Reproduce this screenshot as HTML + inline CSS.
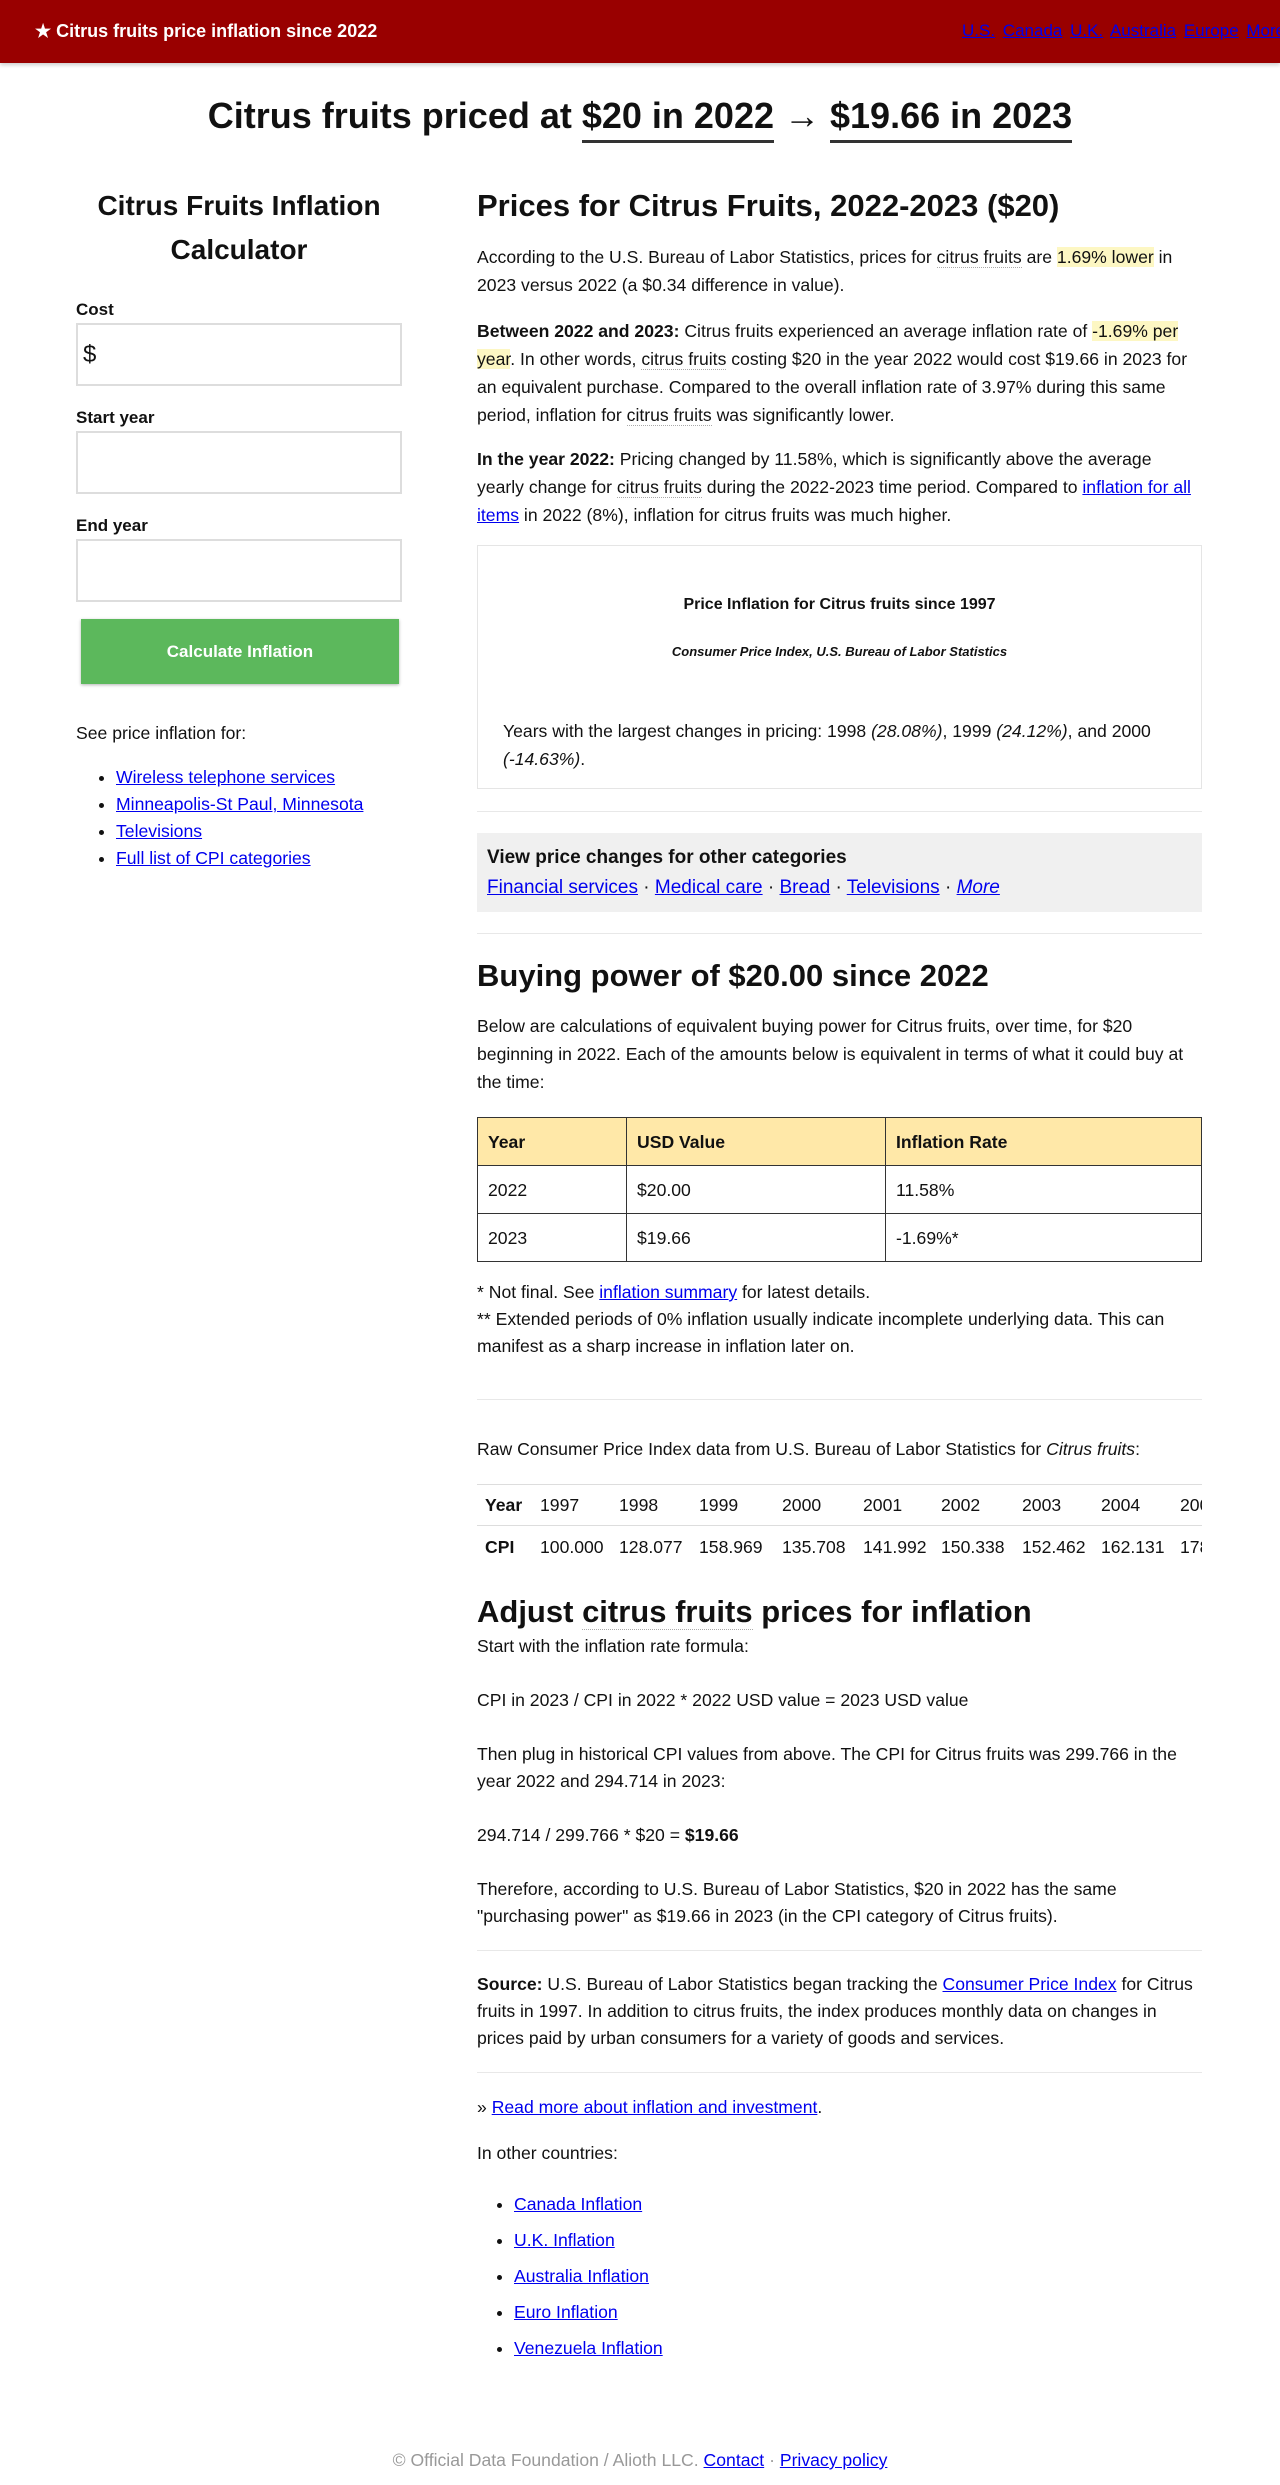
<!DOCTYPE html>
<html><head><meta charset="utf-8">
<style>
*{box-sizing:border-box}
body{margin:0;width:1280px;height:2485px;position:relative;font-family:"Liberation Sans",sans-serif;color:#111;font-size:17.6px;line-height:28px;background:#fff;overflow:hidden}
a{color:#00e}
.hdr{position:absolute;left:0;top:0;width:1280px;height:63px;background:#990000;box-shadow:0 2px 4px rgba(0,0,0,.2)}
.hdr .t{position:absolute;left:35px;top:18px;color:#fff;font-weight:bold;font-size:18px;line-height:26px}
.hdr .n{position:absolute;left:962px;top:18px;font-size:17px;line-height:26px;white-space:nowrap}
.hdr .n a{color:#00e;margin-right:3px}
.abs{position:absolute}
h1{position:absolute;left:0;width:1280px;top:92px;margin:0;text-align:center;font-size:36px;line-height:48px}
h1 u{text-decoration:none;border-bottom:3px solid #333;padding-bottom:4px}
.left{left:76px;width:326px}
.lab{font-weight:bold;font-size:17px}
.inp{position:absolute;left:76px;width:326px;height:63px;border:2px solid #ddd}
.btn{position:absolute;left:81px;top:619px;width:318px;height:65px;background:#5cb85c;color:#fff;font-weight:bold;font-size:17px;text-align:center;line-height:65px;box-shadow:0 1px 3px rgba(0,0,0,.3)}
.r{left:477px;width:725px}
h2{margin:0;font-size:31px;line-height:40px}
.hl{background:#fdf7c3}
.dot{border-bottom:1px dotted #aaa}
p{margin:0}
.hr{position:absolute;left:477px;width:725px;height:1px;background:#e8e8e8}
table.b{border-collapse:collapse;width:725px}
table.b td{border:1px solid #333;height:48px;padding:0 10px;font-size:17.6px}
table.b tr:first-child td{background:#ffe8a8;font-weight:bold}
ul{margin:0;padding-left:40px}
</style></head><body>
<div class="hdr"><div class="t">★ Citrus fruits price inflation since 2022</div>
<div class="n"><a href="#">U.S.</a> <a href="#">Canada</a> <a href="#">U.K.</a> <a href="#">Australia</a> <a href="#">Europe</a> <a href="#">More</a></div></div>

<h1>Citrus fruits priced at <u>$20 in 2022</u> → <u>$19.66 in 2023</u></h1>

<div class="abs left" style="top:184px;text-align:center;font-size:28px;font-weight:bold;line-height:44px">Citrus Fruits Inflation Calculator</div>
<div class="abs left lab" style="top:296px">Cost</div>
<div class="inp" style="top:323px"><span style="position:absolute;left:5px;top:16px;font-size:24px">$</span></div>
<div class="abs left lab" style="top:404px">Start year</div>
<div class="inp" style="top:431px"></div>
<div class="abs left lab" style="top:512px">End year</div>
<div class="inp" style="top:539px"></div>
<div class="btn">Calculate Inflation</div>
<div class="abs left" style="top:719px">See price inflation for:</div>
<ul class="abs" style="left:76px;top:764px;line-height:27px">
<li><a href="#">Wireless telephone services</a></li>
<li><a href="#">Minneapolis-St Paul, Minnesota</a></li>
<li><a href="#">Televisions</a></li>
<li><a href="#">Full list of CPI categories</a></li></ul>

<div class="abs r" style="top:186px"><h2>Prices for Citrus Fruits, 2022-2023 ($20)</h2></div>
<div class="abs r" style="top:243px"><p>According to the U.S. Bureau of Labor Statistics, prices for <span class="dot">citrus fruits</span> are <span class="hl">1.69% lower</span> in 2023 versus 2022 (a $0.34 difference in value).</p></div>
<div class="abs r" style="top:317px"><p><b>Between 2022 and 2023:</b> Citrus fruits experienced an average inflation rate of <span class="hl">-1.69% per year</span>. In other words, <span class="dot">citrus fruits</span> costing $20 in the year 2022 would cost $19.66 in 2023 for an equivalent purchase. Compared to the overall inflation rate of 3.97% during this same period, inflation for <span class="dot">citrus fruits</span> was significantly lower.</p></div>
<div class="abs r" style="top:445px"><p><b>In the year 2022:</b> Pricing changed by 11.58%, which is significantly above the average yearly change for <span class="dot">citrus fruits</span> during the 2022-2023 time period. Compared to <a href="#">inflation for all items</a> in 2022 (8%), inflation for citrus fruits was much higher.</p></div>
<div class="abs r" style="top:545px;height:244px;border:1px solid #e5e5e5">
<div style="position:absolute;top:45px;width:100%;text-align:center;font-weight:bold;font-size:16px">Price Inflation for Citrus fruits since 1997</div>
<div style="position:absolute;top:92px;width:100%;text-align:center;font-weight:bold;font-style:italic;font-size:13px">Consumer Price Index, U.S. Bureau of Labor Statistics</div>
<div style="position:absolute;top:171px;left:25px;right:25px">Years with the largest changes in pricing: 1998 <i>(28.08%)</i>, 1999 <i>(24.12%)</i>, and 2000 <i>(-14.63%)</i>.</div></div>
<div class="hr" style="top:811px"></div>
<div class="abs r" style="top:833px;height:79px;background:#f0f0f0;padding:10px 10px;font-size:19px;line-height:30px"><b>View price changes for other categories</b><br><a href="#">Financial services</a> · <a href="#">Medical care</a> · <a href="#">Bread</a> · <a href="#">Televisions</a> · <a href="#"><i>More</i></a></div>
<div class="hr" style="top:933px"></div>
<div class="abs r" style="top:956px"><h2>Buying power of $20.00 since 2022</h2></div>
<div class="abs r" style="top:1012px"><p>Below are calculations of equivalent buying power for Citrus fruits, over time, for $20 beginning in 2022. Each of the amounts below is equivalent in terms of what it could buy at the time:</p></div>
<div class="abs r" style="top:1117px"><table class="b">
<tr><td style="width:149px">Year</td><td style="width:259px">USD Value</td><td>Inflation Rate</td></tr>
<tr><td>2022</td><td>$20.00</td><td>11.58%</td></tr>
<tr><td>2023</td><td>$19.66</td><td>-1.69%*</td></tr></table></div>
<div class="abs r" style="top:1279px;line-height:27px">* Not final. See <a href="#">inflation summary</a> for latest details.<br>** Extended periods of 0% inflation usually indicate incomplete underlying data. This can manifest as a sharp increase in inflation later on.</div>
<div class="hr" style="top:1399px"></div>
<div class="abs r" style="top:1435px">Raw Consumer Price Index data from U.S. Bureau of Labor Statistics for <i>Citrus fruits</i>:</div>
<div class="abs r" style="top:1484px;height:80px;overflow:hidden;border-top:1px solid #ddd">
<div style="position:absolute;top:40px;left:0;width:725px;height:1px;background:#ddd"></div>
<div style="position:absolute;top:6px;left:0;white-space:nowrap;font-size:17.6px">
<span style="position:absolute;left:8px;font-weight:bold">Year</span>
<span style="position:absolute;left:63px">1997</span><span style="position:absolute;left:142px">1998</span><span style="position:absolute;left:222px">1999</span><span style="position:absolute;left:305px">2000</span><span style="position:absolute;left:386px">2001</span><span style="position:absolute;left:464px">2002</span><span style="position:absolute;left:545px">2003</span><span style="position:absolute;left:624px">2004</span><span style="position:absolute;left:703px">2005</span></div>
<div style="position:absolute;top:48px;left:0;white-space:nowrap;font-size:17.6px">
<span style="position:absolute;left:8px;font-weight:bold">CPI</span>
<span style="position:absolute;left:63px">100.000</span><span style="position:absolute;left:142px">128.077</span><span style="position:absolute;left:222px">158.969</span><span style="position:absolute;left:305px">135.708</span><span style="position:absolute;left:386px">141.992</span><span style="position:absolute;left:464px">150.338</span><span style="position:absolute;left:545px">152.462</span><span style="position:absolute;left:624px">162.131</span><span style="position:absolute;left:703px">178.000</span></div></div>
<div class="abs r" style="top:1592px"><h2>Adjust <span class="dot">citrus fruits</span> prices for inflation</h2></div>
<div class="abs r" style="top:1633px;line-height:27px">Start with the inflation rate formula:<br><br>CPI in 2023 / CPI in 2022 * 2022 USD value = 2023 USD value<br><br>Then plug in historical CPI values from above. The CPI for Citrus fruits was 299.766 in the year 2022 and 294.714 in 2023:<br><br>294.714 / 299.766 * $20 = <b>$19.66</b><br><br>Therefore, according to U.S. Bureau of Labor Statistics, $20 in 2022 has the same "purchasing power" as $19.66 in 2023 (in the CPI category of Citrus fruits).</div>
<div class="hr" style="top:1950px"></div>
<div class="abs r" style="top:1971px;line-height:27px"><b>Source:</b> U.S. Bureau of Labor Statistics began tracking the <a href="#">Consumer Price Index</a> for Citrus fruits in 1997. In addition to citrus fruits, the index produces monthly data on changes in prices paid by urban consumers for a variety of goods and services.</div>
<div class="hr" style="top:2072px"></div>
<div class="abs r" style="top:2093px">» <a href="#">Read more about inflation and investment</a>.</div>
<div class="abs r" style="top:2139px">In other countries:</div>
<ul class="abs" style="left:477px;top:2186px;line-height:36px;padding-left:37px">
<li><a href="#">Canada Inflation</a></li><li><a href="#">U.K. Inflation</a></li><li><a href="#">Australia Inflation</a></li><li><a href="#">Euro Inflation</a></li><li><a href="#">Venezuela Inflation</a></li></ul>
<div class="abs" style="left:0;width:1280px;top:2446px;text-align:center;color:#999;font-size:17.6px">© Official Data Foundation / Alioth LLC. <a href="#">Contact</a> · <a href="#">Privacy policy</a></div>
</body></html>
